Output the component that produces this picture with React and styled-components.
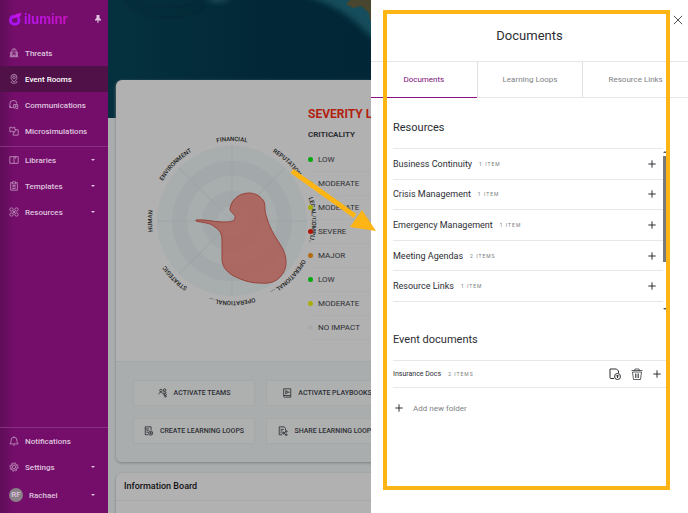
import styled, { createGlobalStyle } from "styled-components";

const GlobalStyle = createGlobalStyle`
  * {
    box-sizing: border-box;
  }
  body {
    margin: 0;
    font-family: Roboto, "Liberation Sans", sans-serif;
    font-size: 8px;
    color: #2c2e33;
    overflow: hidden;
  }
  button {
    font: inherit;
    color: inherit;
    background: none;
    border: 0;
    padding: 0;
    cursor: pointer;
  }
  h1, h2, h3, ul, p {
    margin: 0;
    padding: 0;
    list-style: none;
  }
`;

const ICONS = {
  threats: (
    <path d="M2 21h20M4 21V10h3M20 21V10h-3M7 21V6a5 4 0 0 1 10 0v15M12 2v4M10 8v3M14 8v3M10 14v2M14 14v2M10 21v-3h4v3M4 14h3M17 14h3M4 18h3M17 18h3" />
  ),
  rooms: (
    <>
      <path d="M12 19c-5-5-7-7-7-11a7 7 0 0 1 14 0c0 4-2 6-7 11z" />
      <circle cx="12" cy="8" r="3" />
      <path d="M8 17c-6 2-3 5 4 5s10-3 4-5" />
    </>
  ),
  comms: (
    <>
      <path d="M2 18v-8a8 8 0 0 1 17-1M2 18h7M2 18l2-4" />
      <path d="M11 11h10v8h-1v3l-3-3h-6zM14 14h4M14 16h4" />
    </>
  ),
  sims: (
    <path d="M2 3h5c0 3 4 3 4 0h3v5c3 0 3 4 0 4v2H9c0-3-4-3-4 0H2zM14 9h8v13H10v-4c3 0 3-4 0-4" />
  ),
  libraries: <path d="M2 4h20v16H2zM12 4v16M16 4v5" />,
  templates: (
    <>
      <path d="M8 4H4v18h16V4h-4M8 2h8v5H8z" />
      <path d="M8 11h8M8 14h8M8 18h8" />
    </>
  ),
  resources: (
    <>
      <circle cx="6" cy="6" r="4" />
      <circle cx="18" cy="6" r="4" />
      <circle cx="6" cy="18" r="4" />
      <circle cx="18" cy="18" r="4" />
      <path d="M9 9l6 6M15 9l-6 6" />
    </>
  ),
  bell: <path d="M2 19h20c-3-3-3-6-3-9a7 7 0 0 0-14 0c0 3 0 6-3 9zM10 22h4M12 3V1" />,
  gear: (
    <>
      <circle cx="12" cy="12" r="4" />
      <circle cx="12" cy="12" r="8" />
      <circle cx="12" cy="12" r="10" strokeDasharray="4 3.85" />
    </>
  ),
  teams: (
    <>
      <circle cx="7" cy="6" r="3" />
      <circle cx="16" cy="5" r="3" />
      <path d="M2 15c0-6 9-6 10-1M12 10c3-2 7-1 8 2" />
      <circle cx="17" cy="16" r="3" />
      <path d="M13 13l8 8M17 19v4" />
    </>
  ),
  playbooks: (
    <>
      <path d="M4 2h17v20H6a2 2 0 0 1-2-2zM4 18h17" />
      <path d="M9 6l6 4-6 4zM15 10h4" />
    </>
  ),
  create: (
    <>
      <path d="M10 21H3V2h14v8M3 7h9M6 11h5M6 15h4" />
      <circle cx="16" cy="17" r="5" />
      <path d="M16 14v6M13 17h6" />
    </>
  ),
  share: (
    <>
      <path d="M10 21H3V2h12l3 4v4M6 8h8M6 12h5M6 16h3" />
      <path d="M20 13l-7 4 7 4" />
      <circle cx="20" cy="13" r="2" />
      <circle cx="20" cy="21" r="2" />
      <circle cx="13" cy="17" r="2" />
    </>
  ),
  upload: (
    <>
      <path d="M10 21H4a2 2 0 0 1-2-2V2h13l4 4v4" />
      <circle cx="17" cy="17" r="6" />
      <path d="M17 20v-6M14 17l3-3 3 3" />
    </>
  ),
  trash: (
    <>
      <path d="M1 5h22M7 5l1-3h8l1 3M3 8l2 15h14l2-15M3 8h18" />
      <path d="M9 11v9M12 11v9M15 11v9" />
    </>
  ),
  plus: <path d="M12 1v22M1 12h22" />,
  close: <path d="M2 2l20 20M22 2L2 22" />,
};

const Icon = ({ name, size = 10, weight = 2 }) => (
  <svg
    width={size}
    height={size}
    viewBox="0 0 24 24"
    fill="none"
    stroke="currentColor"
    strokeWidth={weight}
    aria-hidden="true"
  >
    {ICONS[name]}
  </svg>
);

const mainLinks = [
  { icon: "threats", label: "Threats" },
  { icon: "rooms", label: "Event Rooms", active: true },
  { icon: "comms", label: "Communications" },
  { icon: "sims", label: "Microsimulations" },
];

const moreLinks = [
  { icon: "libraries", label: "Libraries", caret: true },
  { icon: "templates", label: "Templates", caret: true },
  { icon: "resources", label: "Resources", caret: true },
];

const levels = [
  { label: "LOW", color: "#00a80c" },
  { label: "MODERATE", color: "#a9ae08" },
  { label: "MODERATE", color: "#a9ae08" },
  { label: "SEVERE", color: "#b01408" },
  { label: "MAJOR", color: "#b06a10" },
  { label: "LOW", color: "#00a80c" },
  { label: "MODERATE", color: "#a9ae08" },
  { label: "NO IMPACT", color: "#a7a9ab" },
];

const actions = [
  { icon: "teams", label: "ACTIVATE TEAMS" },
  { icon: "playbooks", label: "ACTIVATE PLAYBOOKS" },
  { icon: "create", label: "CREATE LEARNING LOOPS" },
  { icon: "share", label: "SHARE LEARNING LOOPS" },
];

const folders = [
  { name: "Business Continuity", count: "1 ITEM" },
  { name: "Crisis Management", count: "1 ITEM" },
  { name: "Emergency Management", count: "1 ITEM" },
  { name: "Meeting Agendas", count: "2 ITEMS" },
  { name: "Resource Links", count: "1 ITEM" },
];

const axes = [
  "FINANCIAL",
  "REPUTATION...",
  "LEGAL/COMPLI...",
  "OPERATIONAL ...",
  "OPERATIONAL ...",
  "STRATEGIC",
  "HUMAN",
  "ENVIRONMENT",
];

function NavItem({ icon, label, active, caret }) {
  return (
    <li>
      <NavLink href="#" $active={active}>
        <Icon name={icon} size={10} />
        <span>{label}</span>
        {caret && <Caret />}
      </NavLink>
    </li>
  );
}

function Radar() {
  return (
    <RadarSvg viewBox="0 0 180 180" role="img" aria-label="Impact radar">
      <defs>
        <path id="ring" d="M90 170A80 80 0 0 1 90 10A80 80 0 0 1 90 170" />
      </defs>
      {[75, 60, 45, 30, 15].map((r, i) => (
        <circle key={r} cx="90" cy="90" r={r} fill={i % 2 ? "#a3a8aa" : "#a8adae"} />
      ))}
      {axes.map((label, i) => (
        <g key={i} transform={`rotate(${i * 45} 90 90)`}>
          <path d="M90 90V15" stroke="#9fa5a6" />
          <text fontSize="6" fontWeight="500" fill="#1c1d20" textAnchor="middle">
            <textPath href="#ring" startOffset="50%">
              {label}
            </textPath>
          </text>
        </g>
      ))}
      <path
        d="M54 89C62 88 72 91 80 91C88 91 92 91 93 87C94 83 88 82 88 78C89 69 97 62 107 62C113 62 118 65 121 69C124 73 122 77 124 84C127 95 130 100 134 107C140 116 144 122 144 131C144 138 142 141 139 145C134 151 127 153 118 152C110 152 102 150 94 146C87 143 80 137 80 128V109C80 102 77 99 73 96C67 91 61 92 54 90Z"
        fill="#ad5248"
        fillOpacity="0.750"
        stroke="#97443b"
      />
    </RadarSvg>
  );
}

function Sidebar() {
  return (
    <Side>
      <Brand>
        <svg width="13" height="14" viewBox="0 0 26 28" aria-hidden="true">
          <path
            d="M10 8C5 9 3 13 3 17a8 7 0 0 0 17 0c0-3-1-5-3-6"
            fill="none"
            stroke="#a913ee"
            strokeWidth="6"
          />
          <path d="M9 14C7 6 15 3 25 2c-1 5-3 9-9 9-3 0-5 1-7 3z" fill="#c812ea" />
        </svg>
        <BrandName>iluminr</BrandName>
        <Pin aria-label="Pin menu">
          <svg width="6" height="8" viewBox="0 0 12 16" fill="currentColor">
            <path d="M3 0h6v6l3 3v2H7v5H5v-5H0V9l3-3z" />
          </svg>
        </Pin>
      </Brand>
      <ul>
        {mainLinks.map((el) => (
          <NavItem key={el.label} {...el} />
        ))}
      </ul>
      <Group>
        {moreLinks.map((el) => (
          <NavItem key={el.label} {...el} />
        ))}
      </Group>
      <Group $bottom>
        <NavItem icon="bell" label="Notifications" />
        <NavItem icon="gear" label="Settings" caret />
        <li>
          <NavLink href="#" $tall>
            <Avatar>RF</Avatar>
            <span>Rachael</span>
            <Caret />
          </NavLink>
        </li>
      </Group>
    </Side>
  );
}

function DocumentsDrawer() {
  return (
    <Drawer>
      <Close aria-label="Close">
        <Icon name="close" size={10} />
      </Close>
      <DrawerTitle>Documents</DrawerTitle>
      <Tabs role="tablist">
        <Tab role="tab" aria-selected="true" $active>
          Documents
        </Tab>
        <Tab role="tab">Learning Loops</Tab>
        <Tab role="tab">Resource Links</Tab>
      </Tabs>
      <DrawerBody>
        <SectionTitle>Resources</SectionTitle>
        <Scroller>
          <FolderList>
            {folders.map((el) => (
              <Folder key={el.name}>
                {el.name}
                <Count>{el.count}</Count>
                <FolderTools $inset>
                  <button aria-label={`Open ${el.name}`}>
                    <Icon name="plus" size={8} weight={3} />
                  </button>
                </FolderTools>
              </Folder>
            ))}
          </FolderList>
          <ScrollTrack>
            <Arrow $up />
            <ScrollThumb />
            <Arrow />
          </ScrollTrack>
        </Scroller>
        <SectionTitle>Event documents</SectionTitle>
        <EventFolder>
          Insurance Docs
          <Count>2 ITEMS</Count>
          <FolderTools>
            <button aria-label="Upload file">
              <Icon name="upload" size={12} />
            </button>
            <button aria-label="Delete folder">
              <Icon name="trash" size={12} weight={1.5} />
            </button>
            <button aria-label="Open Insurance Docs">
              <Icon name="plus" size={8} weight={3} />
            </button>
          </FolderTools>
        </EventFolder>
        <AddFolder>
          <Icon name="plus" size={8} weight={3} />
          Add new folder
        </AddFolder>
      </DrawerBody>
    </Drawer>
  );
}

function App() {
  return (
    <>
      <GlobalStyle />
      <Page>
        <Sidebar />
        <Main>
          <Map viewBox="0 0 580 118" preserveAspectRatio="none" aria-hidden="true">
            <defs>
              <linearGradient id="sea" x1="0" x2="1">
                <stop offset="0" stopColor="#05313e" />
                <stop offset="0.300" stopColor="#022736" />
                <stop offset="1" stopColor="#012433" />
              </linearGradient>
              <filter id="soft">
                <feGaussianBlur stdDeviation="3" />
              </filter>
            </defs>
            <rect width="580" height="118" fill="url(#sea)" />
            <g filter="url(#soft)">
              <path d="M98 -4h24c-4 7-20 7-24 0z" fill="#2b5a62" />
              <path d="M20 -2c15 16 50 20 75 6" fill="none" stroke="#022230" strokeWidth="2" />
              <path d="M190 -6c30 8 50 18 72 42l20 8v-60z" fill="#174d5b" />
            </g>
            <path d="M244 -2h41v26h-18l-5-4-1-7-8-7-8 2-7-4z" fill="#48462f" />
          </Map>
          <Content>
            <Card>
              <Overview>
                <Radar />
                <div>
                  <Severity>SEVERITY LEVEL</Severity>
                  <Criticality>CRITICALITY</Criticality>
                  <ul>
                    {levels.map((el, i) => (
                      <Level key={i} $color={el.color}>
                        {el.label}
                      </Level>
                    ))}
                  </ul>
                </div>
              </Overview>
              <Actions>
                {actions.map((el) => (
                  <Action key={el.label}>
                    <Icon name={el.icon} size={10} />
                    {el.label}
                  </Action>
                ))}
              </Actions>
            </Card>
            <Card>
              <BoardTitle>Information Board</BoardTitle>
              <BoardRow>
                <BoardDot />
                <BoardChip />
              </BoardRow>
            </Card>
          </Content>
        </Main>
      </Page>
      <DocumentsDrawer />
      <Highlight />
      <Pointer width="90" height="68" viewBox="0 0 90 68" aria-hidden="true">
        <path d="M5 7L68 52" stroke="#fcb514" strokeWidth="5" />
        <path d="M75 46L89 67L63 63Z" fill="#fcb514" />
      </Pointer>
    </>
  );
}

const Page = styled.div`
  display: flex;
  height: 100vh;
`;

const Side = styled.nav`
  display: flex;
  flex-direction: column;
  flex: 0 0 108px;
  background: linear-gradient(90deg, #5f0d59, #740e6a 14px);
  color: #dfc4de;
  font-weight: 500;
`;

const Brand = styled.div`
  display: flex;
  align-items: center;
  gap: 2px;
  height: 40px;
  padding: 0 7px 3px 9px;
`;

const BrandName = styled.span`
  font-family: Inter, sans-serif;
  font-size: 13px;
  font-weight: 700;
  line-height: 16px;
  background: linear-gradient(90deg, #b512f0, #c812c0);
  background-clip: text;
  color: transparent;
`;

const Pin = styled.button`
  display: flex;
  margin-left: auto;
`;

const Group = styled.ul`
  border-top: 1px solid #86307f;
  margin-top: ${(props) => (props.$bottom ? "auto" : "2px")};
  padding-bottom: ${(props) => (props.$bottom ? "3px" : "0")};
`;

const NavLink = styled.a`
  display: flex;
  align-items: center;
  gap: 6px;
  height: ${(props) => (props.$tall ? "30px" : "26px")};
  padding: 0 13px 0 9px;
  background: ${(props) => (props.$active ? "#4f1148" : "none")};
  color: ${(props) => (props.$active ? "#fff" : "inherit")};
  text-decoration: none;

  svg {
    color: #c094bd;
  }
`;

const Caret = styled.span`
  margin-left: auto;
  border: 2px solid transparent;
  border-top-color: currentColor;
  border-bottom: 0;
`;

const Avatar = styled.span`
  width: 14px;
  height: 14px;
  border-radius: 50%;
  background: #8a8088;
  text-align: center;
  line-height: 14px;
`;

const Main = styled.main`
  display: grid;
  grid-template-columns: minmax(0, 1fr);
  flex: 1;
  min-width: 0;
  overflow: hidden;
  background: #a9adad;
`;

const Map = styled.svg`
  grid-area: 1 / 1;
  width: 100%;
  height: 118px;
`;

const Content = styled.div`
  grid-area: 1 / 1;
  z-index: 1;
  display: grid;
  gap: 11px;
  align-content: start;
  padding: 80px 8px 0;
`;

const Card = styled.section`
  overflow: hidden;
  border-radius: 6px;
  background: #b1b1b1;
  box-shadow: 0 1px 3px #7c8082;
`;

const Overview = styled.div`
  display: grid;
  grid-template-columns: 192px 1fr;
  padding: 27px 0 21px;
`;

const RadarSvg = styled.svg`
  width: 180px;
  height: 180px;
  margin: 24px 0 0 26px;
  overflow: visible;
`;

const Severity = styled.h2`
  font-size: 12px;
  font-weight: 700;
  line-height: 15px;
  color: #b31f10;
`;

const Criticality = styled.h3`
  font-size: 8px;
  line-height: 26px;
`;

const Level = styled.li`
  display: flex;
  align-items: center;
  gap: 5px;
  height: 24px;
  border-bottom: 1px solid #acadad;

  &::before {
    content: "";
    width: 5px;
    height: 5px;
    border-radius: 50%;
    background: ${(props) => props.$color};
  }
`;

const Actions = styled.div`
  display: grid;
  grid-template-columns: 122px 122px;
  gap: 12px 11px;
  padding: 18px 17px;
  border-top: 1px solid #a3a7a7;
  background: #aaadad;
`;

const Action = styled.button`
  display: flex;
  align-items: center;
  justify-content: center;
  gap: 6px;
  height: 26px;
  border: 1px solid #a6a8a8;
  border-radius: 2px;
  background: #aeb0b0;
  font-size: 7px;
  font-weight: 500;
`;

const BoardTitle = styled.h2`
  padding: 0 8px;
  border-bottom: 1px solid #a6a8a8;
  font-size: 9px;
  font-weight: 500;
  line-height: 27px;
  color: #111;
`;

const BoardRow = styled.div`
  display: flex;
  gap: 10px;
  padding: 12px 9px;
`;

const BoardDot = styled.span`
  width: 8px;
  height: 8px;
  border-radius: 50%;
  background: #b03048;
`;

const BoardChip = styled.span`
  width: 22px;
  height: 8px;
  border-radius: 2px;
  background: #8f98bd;
`;

const Drawer = styled.aside`
  position: fixed;
  inset: 0 0 0 auto;
  z-index: 2;
  width: 317px;
  background: #fff;
`;

const Close = styled.button`
  position: absolute;
  top: 15px;
  right: 5px;
  display: flex;
`;

const DrawerTitle = styled.h1`
  height: 61px;
  padding-top: 27px;
  font-size: 13px;
  font-weight: 400;
  line-height: 18px;
  text-align: center;
`;

const Tabs = styled.div`
  display: grid;
  grid-template-columns: repeat(3, 1fr);
  height: 37px;
  border-top: 1px solid #e6e6e6;
`;

const Tab = styled.button`
  border-bottom: 1px solid ${(props) => (props.$active ? "#8a1482" : "#e6e6e6")};
  color: ${(props) => (props.$active ? "#7d1076" : "#808285")};

  & + & {
    border-left: 1px solid #e0e0e0;
  }
`;

const DrawerBody = styled.div`
  padding: 20px 22px;
`;

const SectionTitle = styled.h2`
  height: 30px;
  font-size: 11px;
  font-weight: 400;
  line-height: 20px;
`;

const Scroller = styled.div`
  display: flex;
  height: 182px;
`;

const FolderList = styled.ul`
  display: flex;
  flex: 1;
  flex-direction: column;
  height: 154px;
  border-top: 1px solid #e8e8e8;
`;

const Folder = styled.li`
  display: flex;
  flex: 1;
  align-items: center;
  gap: 7px;
  border-bottom: 1px solid #e8e8e8;
  font-size: 9px;
`;

const EventFolder = styled.div`
  display: flex;
  align-items: center;
  gap: 7px;
  height: 28px;
  border: 1px solid #e8e8e8;
  border-width: 1px 0;
  font-size: 7px;
`;

const Count = styled.span`
  font-size: 5px;
  letter-spacing: 1px;
  color: #77797c;
`;

const FolderTools = styled.span`
  display: flex;
  align-items: center;
  gap: 10px;
  margin-left: auto;
  margin-right: ${(props) => (props.$inset ? "7px" : "5px")};

  button {
    display: flex;
  }
`;

const ScrollTrack = styled.div`
  display: flex;
  flex-direction: column;
  align-items: center;
  width: 3px;
  height: 162px;
  padding-top: 3px;
`;

const ScrollThumb = styled.div`
  width: 3px;
  height: 106px;
  margin: 3px 0 auto;
  background: #77797c;
`;

const Arrow = styled.span`
  border: 2px solid transparent;
  border-top: ${(props) => (props.$up ? "0" : "2px solid #55575a")};
  border-bottom: ${(props) => (props.$up ? "2px solid #55575a" : "0")};
`;

const AddFolder = styled.button`
  display: flex;
  align-items: center;
  gap: 10px;
  height: 40px;
  padding: 0 2px;
  color: #808285;

  svg {
    color: #333;
  }
`;

// callout drawn on top of the drawer
const Highlight = styled.div`
  position: fixed;
  top: 10px;
  right: 18px;
  bottom: 23px;
  z-index: 3;
  width: 287px;
  border: 4px solid #fcb514;
  pointer-events: none;
`;

const Pointer = styled.svg`
  position: fixed;
  top: 164px;
  right: 311px;
  z-index: 3;
  pointer-events: none;
`;

export default App;
